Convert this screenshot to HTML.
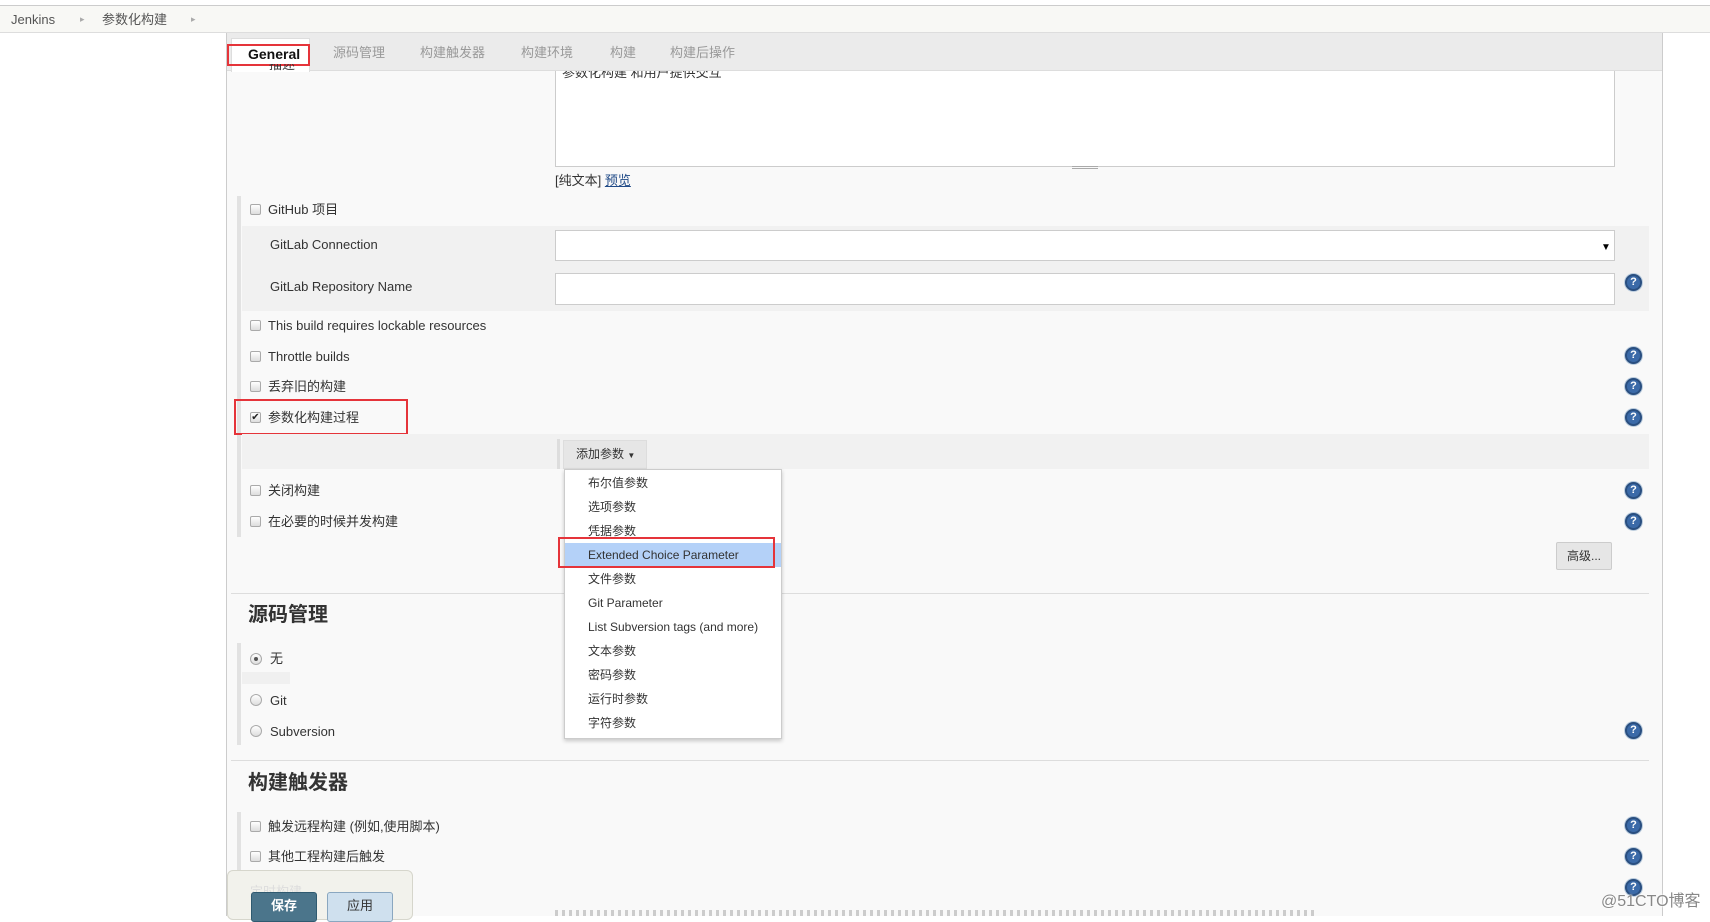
<!DOCTYPE html>
<html><head><meta charset="utf-8">
<style>
*{box-sizing:border-box;margin:0;padding:0}
body{width:1710px;height:916px;overflow:hidden;background:#fff;font-family:"Liberation Sans","Noto Sans CJK SC",sans-serif;font-size:13px;line-height:15px;color:#333;position:relative}
.a{position:absolute;white-space:nowrap}
.cb{position:absolute;width:11px;height:11px;border:1px solid #aaa;border-radius:2px;background:linear-gradient(#fff,#ddd)}
.rd{position:absolute;width:12px;height:12px;border:1px solid #aaa;border-radius:50%;background:linear-gradient(#fff,#ddd)}
.help{position:absolute;left:1625px;width:17px;height:17px;border-radius:50%;background:#3b6aa8;border:2px solid #2a4f80;box-shadow:0 0 0 1px #bcd;color:#fff;font:bold 11px/13px "Liberation Sans",sans-serif;text-align:center}
.red{position:absolute;border:2px solid #e5343a}
.tab{position:absolute;top:45px;color:#999;font-size:13px}
.dd{position:absolute;left:588px;font-size:12px;color:#333}
.h2{position:absolute;left:248px;font-size:20px;line-height:24px;font-weight:bold;color:#333}
</style></head><body>
<div class="a" style="left:0;top:5px;width:1710px;height:1px;background:#ccc"></div>
<div class="a" style="left:0;top:6px;width:1710px;height:27px;background:#f8f8f5;border-bottom:1px solid #ddd"></div>
<div class="a" style="left:11px;top:12px;color:#555">Jenkins</div>
<div class="a" style="left:80px;top:12px;color:#aaa;font-size:9px">▸</div>
<div class="a" style="left:102px;top:12px;color:#555">参数化构建</div>
<div class="a" style="left:191px;top:12px;color:#aaa;font-size:9px">▸</div>
<div class="a" style="left:226px;top:33px;width:1437px;height:883px;background:#f9f9f9;border-left:1px solid #ccc;border-right:1px solid #ccc"></div>
<div class="a" style="left:227px;top:33px;width:1435px;height:38px;background:#ebebeb;border-bottom:1px solid #ddd"></div>
<div class="a" style="left:231px;top:38px;width:79px;height:34px;background:#fff;border:1px solid #ddd;border-bottom:none"></div>
<div class="a" style="left:248px;top:47px;font-weight:bold;color:#111;font-size:14px">General</div>
<div class="red" style="left:227px;top:44px;width:83px;height:22px"></div>
<div class="tab" style="left:333px">源码管理</div>
<div class="tab" style="left:420px">构建触发器</div>
<div class="tab" style="left:521px">构建环境</div>
<div class="tab" style="left:610px">构建</div>
<div class="tab" style="left:670px">构建后操作</div>
<div class="a" style="left:269px;top:64px;height:8px;overflow:hidden;line-height:2px">描述</div>
<div class="a" style="left:555px;top:71px;width:1060px;height:96px;background:#fff;border:1px solid #ccc;border-top:none"></div>
<div class="a" style="left:562px;top:71px;height:10px;overflow:hidden;line-height:4px">参数化构建 和用户提供交互</div>
<div class="a" style="left:1072px;top:166px;width:26px;height:3px;border-top:1px solid #aaa;border-bottom:1px solid #aaa"></div>
<div class="a" style="left:555px;top:173px">[纯文本] <span style="color:#204a87;text-decoration:underline">预览</span></div>
<div class="a" style="left:237px;top:196px;width:4px;height:341px;background:#e2e2e2"></div>
<div class="cb" style="left:250px;top:204px"></div><div class="a" style="left:268px;top:202px">GitHub 项目</div>
<div class="a" style="left:242px;top:226px;width:1407px;height:85px;background:#f1f1f1"></div>
<div class="a" style="left:270px;top:237px">GitLab Connection</div>
<div class="a" style="left:555px;top:230px;width:1060px;height:31px;background:#fff;border:1px solid #ccc"></div>
<div class="a" style="left:1601px;top:240px;font-size:10px;color:#000">▼</div>
<div class="a" style="left:270px;top:279px">GitLab Repository Name</div>
<div class="a" style="left:555px;top:273px;width:1060px;height:32px;background:#fff;border:1px solid #ccc"></div>
<div class="help" style="top:274px">?</div>
<div class="cb" style="left:250px;top:320px"></div><div class="a" style="left:268px;top:318px">This build requires lockable resources</div>
<div class="cb" style="left:250px;top:351px"></div><div class="a" style="left:268px;top:349px">Throttle builds</div><div class="help" style="top:347px">?</div>
<div class="cb" style="left:250px;top:381px"></div><div class="a" style="left:268px;top:379px">丢弃旧的构建</div><div class="help" style="top:378px">?</div>
<div class="cb" style="left:250px;top:412px;font-size:10px;line-height:9px;text-align:center;color:#222">✔</div><div class="a" style="left:268px;top:410px">参数化构建过程</div><div class="help" style="top:409px">?</div>
<div class="red" style="left:234px;top:399px;width:174px;height:36px"></div>
<div class="a" style="left:242px;top:434px;width:1407px;height:35px;background:#f1f1f1"></div>
<div class="a" style="left:557px;top:439px;width:3px;height:30px;background:#ddd"></div>
<div class="a" style="left:563px;top:440px;width:84px;height:29px;background:#e6e6e6;border:1px solid #ddd"></div>
<div class="a" style="left:576px;top:447px;font-size:12px">添加参数 <span style="font-size:8px">▼</span></div>
<div class="cb" style="left:250px;top:485px"></div><div class="a" style="left:268px;top:483px">关闭构建</div><div class="help" style="top:482px">?</div>
<div class="cb" style="left:250px;top:516px"></div><div class="a" style="left:268px;top:514px">在必要的时候并发构建</div><div class="help" style="top:513px">?</div>
<div class="a" style="left:1556px;top:542px;width:56px;height:28px;background:#e6e6e6;border:1px solid #ccc;border-radius:2px;font-size:12px;text-align:center;line-height:26px">高级...</div>
<div class="a" style="left:231px;top:593px;width:1418px;height:1px;background:#ddd"></div>
<div class="h2" style="top:603px">源码管理</div>
<div class="a" style="left:237px;top:643px;width:4px;height:102px;background:#e2e2e2"></div>
<div class="a" style="left:242px;top:672px;width:48px;height:12px;background:#f0f0f0"></div>
<div class="rd" style="left:250px;top:653px"></div><div class="a" style="left:254px;top:657px;width:4px;height:4px;border-radius:50%;background:#555"></div>
<div class="a" style="left:270px;top:651px">无</div>
<div class="rd" style="left:250px;top:694px"></div><div class="a" style="left:270px;top:693px">Git</div>
<div class="rd" style="left:250px;top:725px"></div><div class="a" style="left:270px;top:724px">Subversion</div><div class="help" style="top:722px">?</div>
<div class="a" style="left:231px;top:760px;width:1418px;height:1px;background:#ddd"></div>
<div class="h2" style="top:771px">构建触发器</div>
<div class="a" style="left:237px;top:812px;width:4px;height:104px;background:#e2e2e2"></div>
<div class="cb" style="left:250px;top:821px"></div><div class="a" style="left:268px;top:819px">触发远程构建 (例如,使用脚本)</div><div class="help" style="top:817px">?</div>
<div class="cb" style="left:250px;top:851px"></div><div class="a" style="left:268px;top:849px">其他工程构建后触发</div><div class="help" style="top:848px">?</div>
<div class="help" style="top:879px">?</div>
<div class="a" style="left:555px;top:910px;width:760px;height:6px;background:repeating-linear-gradient(90deg,#888 0 3px,transparent 3px 7px);opacity:.4"></div>
<div class="a" style="left:227px;top:870px;width:186px;height:50px;background:#f2f2ec;border:1px solid #d6d6cc;border-radius:6px"></div>
<div class="a" style="left:250px;top:884px;color:#ddd">定时构建</div>
<div class="a" style="left:251px;top:892px;width:66px;height:30px;background:#4b758b;border:1px solid #2f5a70;border-radius:3px;color:#fff;font-weight:bold;text-align:center;line-height:26px">保存</div>
<div class="a" style="left:327px;top:892px;width:66px;height:30px;background:#cfe0ee;border:1px solid #8aa7c0;border-radius:3px;color:#333;text-align:center;line-height:26px">应用</div>
<div class="a" style="left:564px;top:469px;width:218px;height:270px;background:#fff;border:1px solid #ccc;box-shadow:0 2px 4px rgba(0,0,0,.2)"></div>
<div class="a" style="left:565px;top:543px;width:216px;height:24px;background:#b4d1f8"></div>
<div class="dd" style="top:476px">布尔值参数</div>
<div class="dd" style="top:500px">选项参数</div>
<div class="dd" style="top:524px">凭据参数</div>
<div class="dd" style="top:548px">Extended Choice Parameter</div>
<div class="dd" style="top:572px">文件参数</div>
<div class="dd" style="top:596px">Git Parameter</div>
<div class="dd" style="top:620px">List Subversion tags (and more)</div>
<div class="dd" style="top:644px">文本参数</div>
<div class="dd" style="top:668px">密码参数</div>
<div class="dd" style="top:692px">运行时参数</div>
<div class="dd" style="top:716px">字符参数</div>
<div class="red" style="left:558px;top:537px;width:217px;height:31px"></div>
<div class="a" style="left:1601px;top:893px;font-size:16px;line-height:18px;color:#888;text-shadow:0 0 2px #fff,0 0 2px #fff">@51CTO博客</div>
</body></html>
